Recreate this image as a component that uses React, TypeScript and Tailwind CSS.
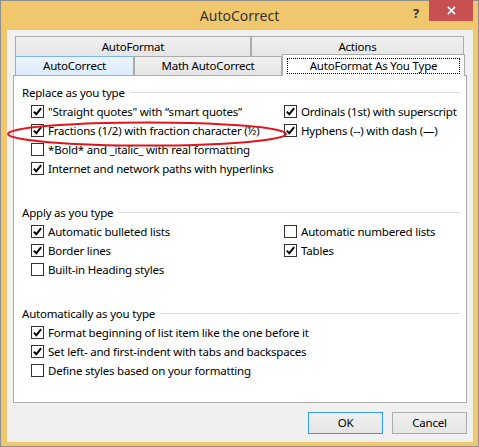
import React from "react";

type Item = { label: string; checked: boolean };

function CheckBox({ checked }: { checked: boolean }) {
  return (
    <span className="flex h-[13px] w-[13px] shrink-0 items-center justify-center border border-[#333333] bg-white">
      {checked && (
        <svg viewBox="0 0 11 11" className="h-[11px] w-[11px]">
          <path d="M1.8 5.6 L4.3 8.2 L9.2 2.2" fill="none" stroke="#000" strokeWidth="1.9" />
        </svg>
      )}
    </span>
  );
}

function Option({ item }: { item: Item }) {
  return (
    <div className="flex h-[19px] items-center gap-[4px]">
      <CheckBox checked={item.checked} />
      <span className="whitespace-nowrap">{item.label}</span>
    </div>
  );
}

function Section({
  title,
  left,
  right = [],
  className = "",
}: {
  title: string;
  left: Item[];
  right?: Item[];
  className?: string;
}) {
  return (
    <div className={className}>
      <div className="flex h-[19px] items-center gap-[5px]">
        <span className="whitespace-nowrap">{title}</span>
        <span className="h-px flex-1 bg-[#dcdcdc]" />
      </div>
      <div className="flex pl-[9px]">
        <div className="w-[253px]">
          {left.map((it) => (
            <Option key={it.label} item={it} />
          ))}
        </div>
        <div>
          {right.map((it) => (
            <Option key={it.label} item={it} />
          ))}
        </div>
      </div>
    </div>
  );
}

export default function App() {
  return (
    <div className="relative flex h-[447px] w-[479px] flex-col border border-[#8f8f8f] bg-[#f0c76d] font-['Noto_Sans',sans-serif] text-[11.5px] tracking-[-0.2px] text-black">
      {/* title bar */}
      <div className="relative flex h-[29px] shrink-0 items-center justify-center">
        <span className="-mt-[1px] text-[14px] tracking-normal text-[#333333]">AutoCorrect</span>
        <span className="absolute right-[59px] top-[3px] text-[13px] font-bold text-[#333333]">?</span>
        <div className="absolute -top-[1px] right-[5px] flex h-[21px] w-[44px] items-center justify-center bg-[#c75050]">
          <svg viewBox="0 0 10 10" className="h-[9px] w-[9px]">
            <path d="M1 1 L9 9 M9 1 L1 9" stroke="#fff" strokeWidth="1.8" />
          </svg>
        </div>
      </div>

      {/* dialog body */}
      <div className="mb-[4px] ml-[6px] mr-[5px] flex flex-1 flex-col bg-[#f0f0f0] px-[6px] pt-[6px]">
        {/* tabs */}
        <div className="ml-[2px] flex flex-col">
          <div className="flex h-[20px]">
            <div className="flex w-[236px] items-center justify-center border border-b-0 border-[#acacac] bg-gradient-to-b from-[#f0f0f0] to-[#e5e5e5]">
              AutoFormat
            </div>
            <div className="flex w-[213px] items-center justify-center border border-b-0 border-[#acacac] bg-gradient-to-b from-[#f0f0f0] to-[#e5e5e5]">
              Actions
            </div>
          </div>
          <div className="flex h-[19px]">
            <div className="flex w-[119px] items-center justify-center border border-b-0 border-[#7eb4ea] bg-gradient-to-b from-[#ecf4fc] to-[#dcecfc]">
              AutoCorrect
            </div>
            <div className="flex w-[148px] items-center justify-center border border-b-0 border-[#acacac] bg-gradient-to-b from-[#f0f0f0] to-[#e5e5e5]">
              Math AutoCorrect
            </div>
            <div className="relative z-10 -mt-[2px] flex h-[22px] w-[183px] border border-b-0 border-[#acacac] bg-white px-[4px] pb-[2px] pt-[3px]">
              <div className="flex flex-1 items-center justify-center border border-dotted border-black">
                AutoFormat As You Type
              </div>
            </div>
          </div>
        </div>

        {/* panel */}
        <div className="h-[328px] border border-[#acacac] bg-white pl-[8px] pr-[5px] pt-[7px]">
          <Section
            title="Replace as you type"
            left={[
              { label: "\"Straight quotes\" with \u201csmart quotes\u201d", checked: true },
              { label: "Fractions (1/2) with fraction character (\u00bd)", checked: true },
              { label: "*Bold* and _italic_ with real formatting", checked: false },
              { label: "Internet and network paths with hyperlinks", checked: true },
            ]}
            right={[
              { label: "Ordinals (1st) with superscript", checked: true },
              { label: "Hyphens (--) with dash (\u2014)", checked: true },
            ]}
          />
          <Section
            className="mt-[25px]"
            title="Apply as you type"
            left={[
              { label: "Automatic bulleted lists", checked: true },
              { label: "Border lines", checked: true },
              { label: "Built-in Heading styles", checked: false },
            ]}
            right={[
              { label: "Automatic numbered lists", checked: false },
              { label: "Tables", checked: true },
            ]}
          />
          <Section
            className="mt-[25px]"
            title="Automatically as you type"
            left={[
              { label: "Format beginning of list item like the one before it", checked: true },
              { label: "Set left- and first-indent with tabs and backspaces", checked: true },
              { label: "Define styles based on your formatting", checked: false },
            ]}
          />
        </div>

        {/* buttons */}
        <div className="mt-[9px] flex justify-end gap-[9px]">
          <button className="h-[22px] w-[75px] border border-[#3399ff] bg-gradient-to-b from-[#f0f0f0] to-[#e5e5e5]">
            OK
          </button>
          <button className="h-[22px] w-[75px] border border-[#acacac] bg-gradient-to-b from-[#f0f0f0] to-[#e5e5e5]">
            Cancel
          </button>
        </div>
      </div>

      {/* red annotation ellipse */}
      <svg className="pointer-events-none absolute left-[5px] top-[119px]" width="282" height="28" viewBox="0 0 282 28">
        <ellipse cx="141" cy="14" rx="139" ry="11.5" fill="none" stroke="#e3131b" strokeWidth="2" />
      </svg>
    </div>
  );
}
